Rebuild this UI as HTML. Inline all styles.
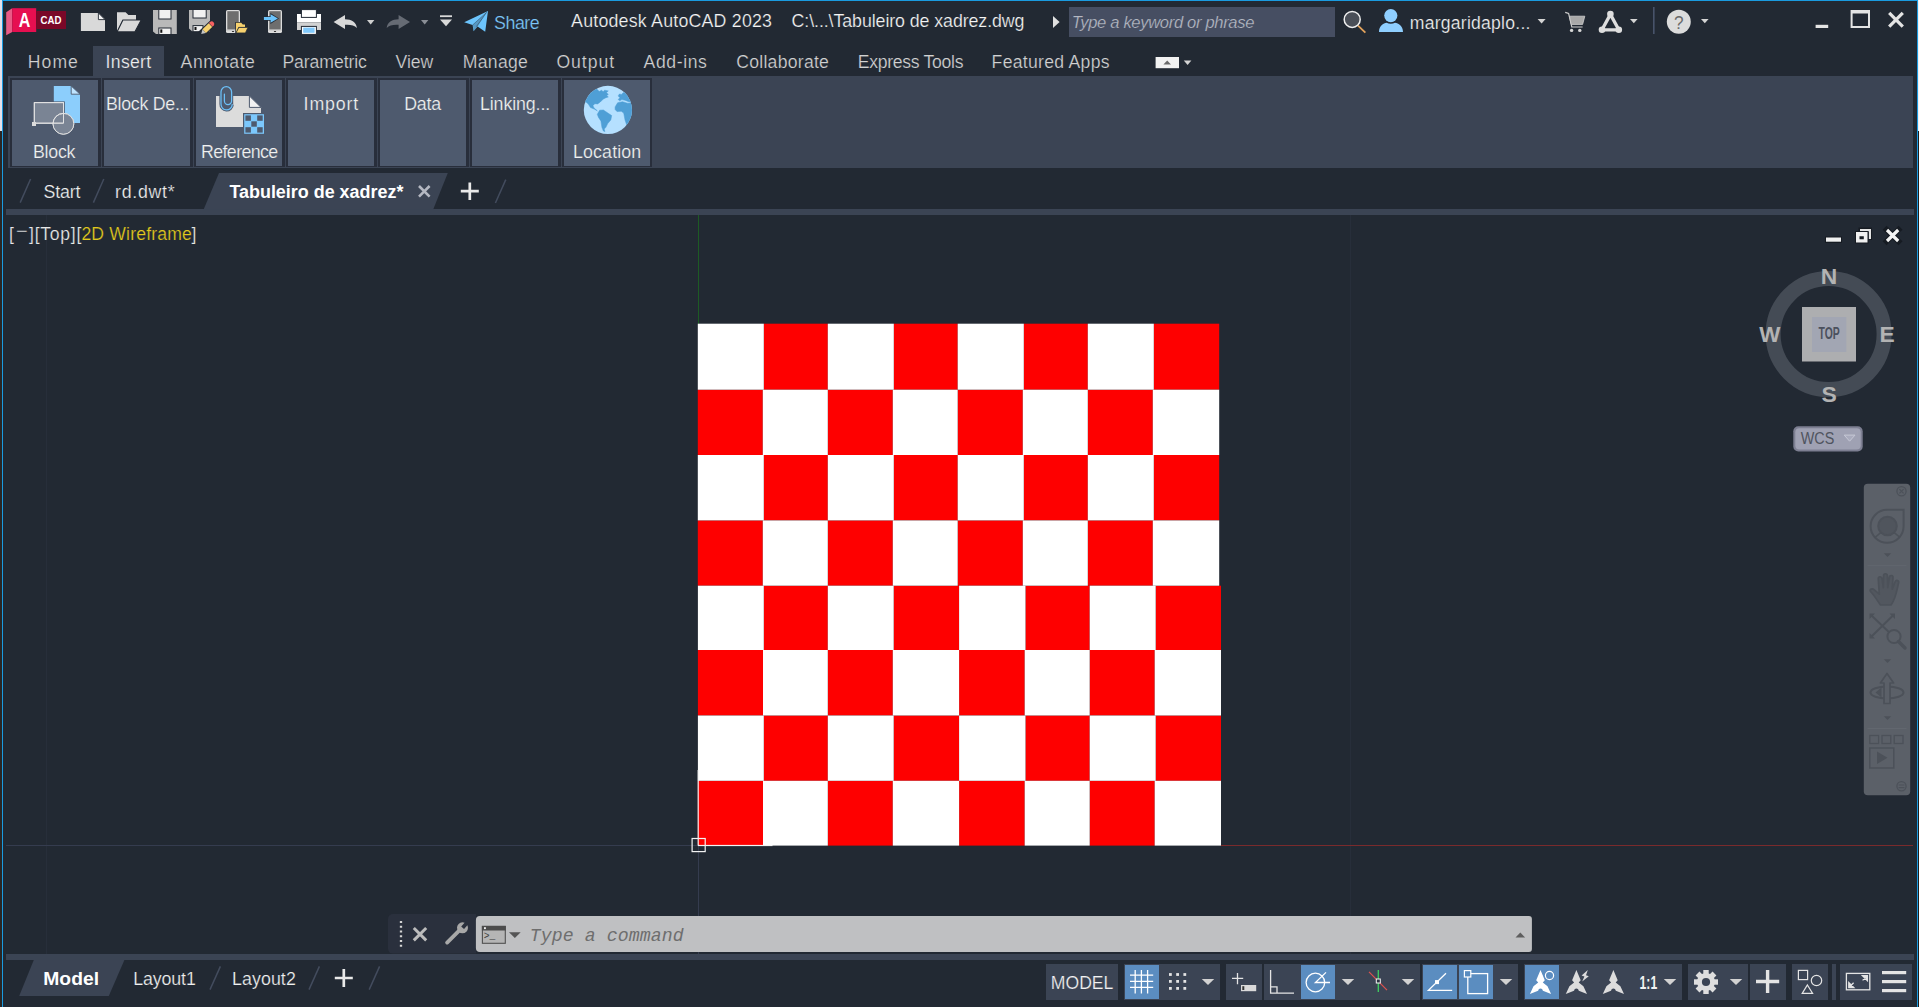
<!DOCTYPE html>
<html lang="en"><head><meta charset="utf-8"><title>Autodesk AutoCAD 2023 - Tabuleiro de xadrez.dwg</title>
<style>
html,body{margin:0;padding:0;background:#222933;overflow:hidden}
body{width:1919px;height:1007px;position:relative;font-family:"Liberation Sans", sans-serif}
#app{position:absolute;left:0;top:0;width:1919px;height:1007px;background:#222933;overflow:hidden}
#app>div{position:absolute;overflow:hidden}
svg{display:block;position:absolute;left:0;top:0}
text{white-space:pre}
</style></head><body><div id="app">
<div class="titlebar" style="left:0px;top:0px;width:1919px;height:44px"><svg width="1919" height="44" viewBox="0 0 1919 44"><rect x="0" y="0" width="1919" height="44" fill="#222933"/><path d="M6.2 12.2 L12.2 8.2 V32 L6.2 35.2 Z" fill="#ea5a86"/><rect x="12.2" y="8.2" width="24" height="23.8" fill="#e60f50"/><rect x="36.2" y="11" width="29.8" height="18" fill="#7a0828"/><text x="18.70" y="26.60" textLength="11.60" lengthAdjust="spacingAndGlyphs" font-family='"Liberation Sans", sans-serif' font-size="19.50" font-weight="bold" font-style="normal" fill="#ffffff">A</text><text x="40.56" y="23.80" textLength="20.88" lengthAdjust="spacingAndGlyphs" font-family='"Liberation Sans", sans-serif' font-size="10.60" font-weight="bold" font-style="normal" fill="#ffffff">CAD</text><path d="M80.9 13 H98.4 L105 19.6 V31 H80.9 Z" fill="#d9d9d9"/><path d="M98.4 13 L105 19.6 H98.4 Z" fill="#f4f4f4" stroke="#222933" stroke-width="0.9"/><path d="M117 31.6 V12.2 H125.6 L128.4 15 H136 V20 H122.6 Z" fill="#d9d9d9"/><path d="M122.9 20 H141.2 L134.8 31.9 H117 Z" fill="#d9d9d9" stroke="#222933" stroke-width="1.1"/><path d="M153.0 10.0 h23.8 v24.0 h-20.8 l-3 -2.6 z" fill="#b9b9b9"/><rect x="158.8" y="9.5" width="12.2" height="9.5" fill="#f1f1f1" stroke="#222933" stroke-width="1"/><rect x="158.8" y="28.0" width="12.2" height="6.5" fill="#f1f1f1" stroke="#222933" stroke-width="1"/><rect x="160.3" y="29.4" width="2" height="3.4" fill="#111"/><path d="M189.0 10.0 h21.0 v21.2 h-18.0 l-3 -2.6 z" fill="#b9b9b9"/><rect x="193.0" y="9.5" width="13.2" height="8.5" fill="#f1f1f1" stroke="#222933" stroke-width="1"/><rect x="193.0" y="25.6" width="10.0" height="6.1" fill="#f1f1f1" stroke="#222933" stroke-width="1"/><rect x="194.5" y="27.0" width="2" height="3.0" fill="#111"/><g transform="translate(201.2 34) rotate(-43.7)"><path d="M-0.6 -3.6 L17.4 -3.6 L17.4 3.6 L-0.6 3.6 Z" fill="#222933"/><path d="M0 0 L4.2 -2.5 V2.5 Z" fill="#c4c4c4"/><rect x="4.2" y="-2.5" width="8.6" height="5" fill="#f7d16e"/><rect x="13.4" y="-2.5" width="1.4" height="5" fill="#f66161"/><path d="M13.4 -2.5 h1.2 a2.5 2.5 0 0 1 0 5 h-1.2 z" fill="#f66161"/></g><rect x="226.0" y="10.0" width="14" height="23" rx="1.6" fill="#dcdcdc"/><rect x="227.3" y="11.2" width="11.4" height="18.4" fill="#6e6e6e"/><rect x="226.0" y="29.6" width="14" height="0.8" fill="#bdbdbd"/><rect x="231.9" y="30.9" width="2.2" height="1" rx="0.5" fill="#333"/><path d="M235.3 33.6 V22 H241.6 L243.2 23.8 H245.8 V27 L248.9 26.6 L246 33.6 Z" fill="#222933"/><path d="M236 32.6 V22.8 H241.2 L242.8 24.6 H245 V27 H238.6 Z" fill="#f7d16e"/><path d="M238.8 27.4 H247.9 L245.4 32.9 H236 Z" fill="#f7d16e" stroke="#222933" stroke-width="0.7"/><rect x="268.0" y="10.0" width="14" height="23" rx="1.6" fill="#dcdcdc"/><rect x="269.3" y="11.2" width="11.4" height="18.4" fill="#6e6e6e"/><rect x="268.0" y="29.6" width="14" height="0.8" fill="#bdbdbd"/><rect x="273.9" y="30.9" width="2.2" height="1" rx="0.5" fill="#333"/><path d="M263.4 16.2 H270.4 V13 L279 18.5 L270.4 24 V20.7 H263.4 Z" fill="#222933"/><path d="M263.9 16.9 H270.6 V14.3 L277.9 18.5 L270.6 22.8 V20.1 H263.9 Z" fill="#6cc4fc"/><rect x="297" y="14" width="24" height="8.4" fill="#ffffff"/><rect x="297" y="22.4" width="24" height="7.6" fill="#d2d2d2"/><rect x="301.4" y="9.6" width="15" height="7.8" fill="#ffffff" stroke="#222933" stroke-width="1"/><rect x="301.4" y="26.4" width="15" height="8" fill="#ffffff" stroke="#222933" stroke-width="1"/><rect x="303.2" y="27.6" width="11.4" height="5.2" fill="#82c9fb"/><path d="M333.6 22 L345 15 V19.2 C351.6 19.2 356.4 22 356.9 28 C354.4 25 350.6 24.6 345 24.8 V29 Z" fill="#d9d9d9"/><path d="M367.0 20.0 h7.4 l-3.70 4.4 z" fill="#cfcfcf"/><path d="M410 22 L398.6 15 V19.2 C392 19.2 387.2 22 386.7 28 C389.2 25 393 24.6 398.6 24.8 V29 Z" fill="#666b74"/><path d="M421.0 20.0 h7.4 l-3.70 4.4 z" fill="#8a8e96"/><rect x="440" y="15.3" width="12" height="1.8" fill="#d9d9d9"/><path d="M440 19.6 h12 l-6 6.6 z" fill="#d9d9d9"/><path d="M464.2 22.2 L488 11 L485.2 31.8 L477.6 26.6 L473.6 31.2 L472.6 25 Z" fill="#6cc4fc"/><path d="M472.6 25 L486.2 13 L477.6 26.6 L474 30.6 Z" fill="#222933" opacity="0.28"/><path d="M472.6 25 L486.6 12.4 L476.4 26.6" fill="none" stroke="#222933" stroke-width="0.6" opacity="0.7"/><text x="494.10" y="29.20" textLength="45.50" lengthAdjust="spacing" font-family='"Liberation Sans", sans-serif' font-size="17.80" font-weight="normal" font-style="normal" fill="#7cc6fa" stroke="#222933" stroke-width="0.22">Share</text><text x="571.10" y="27.00" textLength="200.90" lengthAdjust="spacing" font-family='"Liberation Sans", sans-serif' font-size="17.80" font-weight="normal" font-style="normal" fill="#f4f4f4" stroke="#222933" stroke-width="0.22">Autodesk AutoCAD 2023</text><text x="791.50" y="27.00" textLength="233.00" lengthAdjust="spacing" font-family='"Liberation Sans", sans-serif' font-size="17.80" font-weight="normal" font-style="normal" fill="#f4f4f4" stroke="#222933" stroke-width="0.22">C:\...\Tabuleiro de xadrez.dwg</text><path d="M1053 16 L1059.6 22 L1053 28 Z" fill="#e0e0e0"/><rect x="1069" y="7" width="266" height="30" fill="#464e62"/><text x="1071.72" y="27.90" textLength="182.68" lengthAdjust="spacing" font-family='"Liberation Sans", sans-serif' font-size="16.60" font-weight="normal" font-style="italic" fill="#b4b8c2" stroke="#464e62" stroke-width="0.22">Type a keyword or phrase</text><path d="M1358 25.6 L1365.4 32.6" stroke="#e3a35c" stroke-width="1.8"/><circle cx="1352.2" cy="19.4" r="8" fill="#4a4f58" stroke="#efefef" stroke-width="1.5"/><circle cx="1390.8" cy="15.6" r="6.6" fill="#8fcfff"/><path d="M1379 32 C1379 26 1383.4 23.4 1386.6 22.8 C1389 24.2 1392.6 24.2 1395 22.8 C1398.4 23.4 1403 26 1403 32 Z" fill="#8fcfff"/><text x="1409.80" y="29.00" textLength="120.60" lengthAdjust="spacing" font-family='"Liberation Sans", sans-serif' font-size="17.60" font-weight="normal" font-style="normal" fill="#f2f2f2" stroke="#222933" stroke-width="0.22">margaridaplo...</text><path d="M1537.6 18.9 h8.0 l-4.00 4.6 z" fill="#d4d4d4"/><path d="M1565.2 12.4 L1568.6 13.4 L1571.8 27 H1582.6" fill="none" stroke="#cfcfcf" stroke-width="1.2"/><path d="M1569.4 16.2 H1584.8 L1582.6 24.4 H1571.2 Z" fill="#a8a8a8" stroke="#cfcfcf" stroke-width="0.8"/><circle cx="1571.6" cy="30.4" r="1.7" fill="#d6d6d6"/><circle cx="1579.8" cy="30.4" r="1.7" fill="#d6d6d6"/><path d="M1610.4 14.4 L1602 29.8 H1618.8 Z" fill="none" stroke="#dedede" stroke-width="3.3" stroke-linejoin="round"/><circle cx="1610.4" cy="14" r="3.3" fill="#dedede"/><circle cx="1602" cy="29.8" r="3.3" fill="#dedede"/><circle cx="1618.8" cy="29.8" r="3.3" fill="#dedede"/><path d="M1630.0 18.9 h7.6 l-3.80 4.4 z" fill="#d4d4d4"/><rect x="1653" y="7" width="1.6" height="27" fill="#48536a"/><circle cx="1678.8" cy="21.8" r="12" fill="#dcdcdc"/><text x="1674.10" y="28.60" textLength="9.60" lengthAdjust="spacingAndGlyphs" font-family='"Liberation Sans", sans-serif' font-size="18.50" font-weight="normal" font-style="normal" fill="#6a6a6a">?</text><path d="M1701.0 18.9 h7.6 l-3.80 4.4 z" fill="#d4d4d4"/><rect x="1815.6" y="24.8" width="12.6" height="3.2" fill="#e4e4e4"/><path d="M1850.6 10 h19.4 v18 h-19.4 z M1852.6 13.4 v12.6 h15.4 v-12.6 z" fill="#e4e4e4" fill-rule="evenodd"/><path d="M1889.2 12.8 L1902.8 26.6 M1902.8 12.8 L1889.2 26.6" stroke="#e4e4e4" stroke-width="3.2"/></svg></div>
<div class="ribbon-tabs" style="left:0px;top:44px;width:1919px;height:32px"><svg width="1919" height="32" viewBox="0 44 1919 32"><rect x="0" y="44" width="1919" height="32" fill="#222933"/><rect x="93" y="46" width="71" height="30" fill="#3b4454"/><text x="27.80" y="67.60" textLength="50.10" lengthAdjust="spacing" font-family='"Liberation Sans", sans-serif' font-size="17.60" font-weight="normal" font-style="normal" fill="#d2d2d2" stroke="#222933" stroke-width="0.22">Home</text><text x="105.60" y="67.60" textLength="45.50" lengthAdjust="spacing" font-family='"Liberation Sans", sans-serif' font-size="17.60" font-weight="normal" font-style="normal" fill="#f0f0f0" stroke="#3b4454" stroke-width="0.22">Insert</text><text x="180.60" y="67.60" textLength="74.30" lengthAdjust="spacing" font-family='"Liberation Sans", sans-serif' font-size="17.60" font-weight="normal" font-style="normal" fill="#d2d2d2" stroke="#222933" stroke-width="0.22">Annotate</text><text x="282.40" y="67.60" textLength="84.50" lengthAdjust="spacing" font-family='"Liberation Sans", sans-serif' font-size="17.60" font-weight="normal" font-style="normal" fill="#d2d2d2" stroke="#222933" stroke-width="0.22">Parametric</text><text x="395.60" y="67.60" textLength="37.50" lengthAdjust="spacing" font-family='"Liberation Sans", sans-serif' font-size="17.60" font-weight="normal" font-style="normal" fill="#d2d2d2" stroke="#222933" stroke-width="0.22">View</text><text x="462.80" y="67.60" textLength="65.10" lengthAdjust="spacing" font-family='"Liberation Sans", sans-serif' font-size="17.60" font-weight="normal" font-style="normal" fill="#d2d2d2" stroke="#222933" stroke-width="0.22">Manage</text><text x="556.40" y="67.60" textLength="57.70" lengthAdjust="spacing" font-family='"Liberation Sans", sans-serif' font-size="17.60" font-weight="normal" font-style="normal" fill="#d2d2d2" stroke="#222933" stroke-width="0.22">Output</text><text x="643.60" y="67.60" textLength="63.30" lengthAdjust="spacing" font-family='"Liberation Sans", sans-serif' font-size="17.60" font-weight="normal" font-style="normal" fill="#d2d2d2" stroke="#222933" stroke-width="0.22">Add-ins</text><text x="736.20" y="67.60" textLength="92.70" lengthAdjust="spacing" font-family='"Liberation Sans", sans-serif' font-size="17.60" font-weight="normal" font-style="normal" fill="#d2d2d2" stroke="#222933" stroke-width="0.22">Collaborate</text><text x="857.80" y="67.60" textLength="105.70" lengthAdjust="spacing" font-family='"Liberation Sans", sans-serif' font-size="17.60" font-weight="normal" font-style="normal" fill="#d2d2d2" stroke="#222933" stroke-width="0.22">Express Tools</text><text x="991.60" y="67.60" textLength="117.90" lengthAdjust="spacing" font-family='"Liberation Sans", sans-serif' font-size="17.60" font-weight="normal" font-style="normal" fill="#d2d2d2" stroke="#222933" stroke-width="0.22">Featured Apps</text><rect x="1155.6" y="57" width="23.4" height="11.2" fill="#f2f2f2"/><path d="M1163.4 64.6 h7.6 l-3.8 -4 z" fill="#6a6a6a"/><path d="M1183.8 60.6 h7.6 l-3.8 4.4 z" fill="#d4d4d4"/></svg></div>
<div class="ribbon-panel" style="left:0px;top:76px;width:1919px;height:92px"><svg width="1919" height="92" viewBox="0 76 1919 92"><rect x="0" y="76" width="1919" height="92" fill="#222933"/><rect x="8" y="76" width="1905" height="92" fill="#3b4454"/><rect x="10" y="78" width="91" height="89" fill="#282e3b"/><rect x="12" y="80" width="86" height="86" fill="#4e5a6e"/><rect x="102" y="78" width="91" height="89" fill="#282e3b"/><rect x="104" y="80" width="86" height="86" fill="#4e5a6e"/><rect x="194" y="78" width="91" height="89" fill="#282e3b"/><rect x="196" y="80" width="86" height="86" fill="#4e5a6e"/><rect x="286" y="78" width="91" height="89" fill="#282e3b"/><rect x="288" y="80" width="86" height="86" fill="#4e5a6e"/><rect x="378" y="78" width="91" height="89" fill="#282e3b"/><rect x="380" y="80" width="86" height="86" fill="#4e5a6e"/><rect x="470" y="78" width="91" height="89" fill="#282e3b"/><rect x="472" y="80" width="86" height="86" fill="#4e5a6e"/><rect x="562" y="78" width="90" height="89" fill="#282e3b"/><rect x="564" y="80" width="86" height="86" fill="#4e5a6e"/><rect x="8" y="168" width="1905" height="0" fill="#3b4454"/><path d="M53.8 86 H71.2 L80 94.2 V123 H53.8 Z" fill="#8ccefc"/><path d="M71.2 86 L80 94.2 H71.2 Z" fill="#bfe4ff" stroke="#4e5a6e" stroke-width="0.9"/><rect x="33" y="101.4" width="31.8" height="23" fill="#4e5a6e"/><rect x="34.3" y="102.6" width="29.2" height="20.6" fill="#7a8494" stroke="#e2e2e2" stroke-width="1"/><circle cx="63.4" cy="123.8" r="10.4" fill="#7a8494" fill-opacity="0.0" stroke="#e2e2e2" stroke-width="1"/><path d="M63.4 123.8 m-10.4 0 a10.4 10.4 0 1 0 10.4 -10.4 v10.4 z" fill="#7a8494"/><path d="M64.9 113.5 a10.4 10.4 0 0 1 4.6 2 v8.1 h-4.6 z" fill="#7a8494"/><circle cx="63.4" cy="123.8" r="10.4" fill="none" stroke="#e2e2e2" stroke-width="1"/><path d="M34.3 102.6 h29.2 v20.6 h-29.2 z" fill="none" stroke="#e2e2e2" stroke-width="1"/><rect x="32" y="122" width="4" height="4" fill="#dcdcdc"/><path d="M216 96 H249.4 L261 107.4 V127 H216 Z" fill="#dcdcdc"/><path d="M249.4 96 L261 107.4 H249.4 Z" fill="#f2f2f2" stroke="#4e5a6e" stroke-width="1"/><path d="M231.6 104.4 V92 a5.3 5.3 0 0 0 -10.6 0 V104 a5.6 5.6 0 0 0 11.2 0.6" fill="#4e5a6e" stroke="#4e5a6e" stroke-width="3.2"/><path d="M224.4 94 V101 a3.6 3.6 0 0 0 7.2 0 V92 a5.3 5.3 0 0 0 -10.6 0 V104 a5.6 5.6 0 0 0 11.2 0.6" fill="none" stroke="#6cc0f8" stroke-width="1.25" stroke-linecap="round"/><rect x="243" y="113" width="22" height="21.6" fill="#4e5a6e"/><rect x="244.2" y="114.2" width="19.8" height="19.6" fill="#7cc8fc"/><rect x="245.4" y="115.4" width="5.5" height="5.4" fill="#4e5a6e"/><rect x="257.2" y="115.4" width="5.5" height="5.4" fill="#4e5a6e"/><rect x="251.3" y="121.3" width="5.5" height="5.4" fill="#4e5a6e"/><rect x="245.4" y="127.2" width="5.5" height="5.4" fill="#4e5a6e"/><rect x="257.2" y="127.2" width="5.5" height="5.4" fill="#4e5a6e"/><circle cx="607.9" cy="109.9" r="24.1" fill="#b5e0ff"/><clipPath id="gl"><circle cx="607.9" cy="109.9" r="24.1"/></clipPath><g clip-path="url(#gl)" fill="#4f9fd6" stroke="#4f9fd6" stroke-width="0.5" stroke-linejoin="round"><path d="M580.0 103.0 L583.0 92.0 L594.2 88.0 L597.3 89.4 L599.2 91.6 L601.6 90.2 L603.2 91.8 L604.6 90.2 L608.3 90.9 L606.4 92.6 L608.3 94.4 L606.6 95.4 L608.3 96.9 L605.9 97.7 L603.4 98.9 L600.3 102.0 L597.6 103.9 L594.8 103.7 L592.9 105.7 L594.2 108.2 L597.3 110.8 L594.2 109.0 L590.5 107.6 L588.6 104.5 L586.8 102.6 L585.4 102.0 Z"/><path d="M597.3 114.3 L599.7 110.2 L603.4 110.0 L607.1 112.5 L611.7 115.6 L610.8 119.9 L607.7 123.6 L605.9 127.3 L604.2 129.1 L604.9 131.6 L603.4 131.0 L601.9 127.3 L600.9 121.0 L598.5 117.4 Z"/><path d="M618.2 95.9 L619.4 94.0 L621.6 94.4 L623.1 92.8 L624.9 92.2 L628.0 90.0 L636.0 100.0 L631.4 102.2 L628.0 101.4 L625.0 100.2 L621.9 99.6 L619.7 100.8 L618.2 99.6 L619.9 97.7 Z"/><path d="M615.1 106.9 L617.6 102.8 L622.5 101.7 L627.4 103.2 L634.0 103.0 L634.0 120.0 L626.8 125.2 L625.0 119.9 L623.7 113.1 L621.3 111.3 L617.0 111.6 L615.1 109.4 Z"/></g><text x="33.00" y="157.60" textLength="42.40" lengthAdjust="spacing" font-family='"Liberation Sans", sans-serif' font-size="17.80" font-weight="normal" font-style="normal" fill="#f2f2f2" stroke="#4e5a6e" stroke-width="0.22">Block</text><text x="106.00" y="109.80" textLength="83.20" lengthAdjust="spacing" font-family='"Liberation Sans", sans-serif' font-size="17.80" font-weight="normal" font-style="normal" fill="#f2f2f2" stroke="#4e5a6e" stroke-width="0.22">Block De...</text><text x="201.00" y="157.60" textLength="77.20" lengthAdjust="spacing" font-family='"Liberation Sans", sans-serif' font-size="17.80" font-weight="normal" font-style="normal" fill="#f2f2f2" stroke="#4e5a6e" stroke-width="0.22">Reference</text><text x="303.60" y="109.80" textLength="54.60" lengthAdjust="spacing" font-family='"Liberation Sans", sans-serif' font-size="17.80" font-weight="normal" font-style="normal" fill="#f2f2f2" stroke="#4e5a6e" stroke-width="0.22">Import</text><text x="404.20" y="109.80" textLength="37.00" lengthAdjust="spacing" font-family='"Liberation Sans", sans-serif' font-size="17.80" font-weight="normal" font-style="normal" fill="#f2f2f2" stroke="#4e5a6e" stroke-width="0.22">Data</text><text x="480.00" y="109.80" textLength="70.20" lengthAdjust="spacing" font-family='"Liberation Sans", sans-serif' font-size="17.80" font-weight="normal" font-style="normal" fill="#f2f2f2" stroke="#4e5a6e" stroke-width="0.22">Linking...</text><text x="573.02" y="157.60" textLength="68.22" lengthAdjust="spacing" font-family='"Liberation Sans", sans-serif' font-size="17.80" font-weight="normal" font-style="normal" fill="#f2f2f2" stroke="#4e5a6e" stroke-width="0.22">Location</text></svg></div>
<div class="file-tabs" style="left:0px;top:168px;width:1919px;height:47px"><svg width="1919" height="47" viewBox="0 168 1919 47"><rect x="0" y="168" width="1919" height="47" fill="#222933"/><rect x="6" y="209" width="1908" height="6" fill="#3b4454"/><path d="M203.6 209.5 L219 173 H447.8 L433.2 209.5 Z" fill="#3b4454"/><path d="M20.2 202.6 L30.6 179" stroke="#434c5e" stroke-width="1.5"/><path d="M93.4 202.6 L103.8 179" stroke="#434c5e" stroke-width="1.5"/><path d="M495.4 203 L505.8 179.6" stroke="#434c5e" stroke-width="1.5"/><text x="43.40" y="197.60" textLength="37.00" lengthAdjust="spacing" font-family='"Liberation Sans", sans-serif' font-size="17.80" font-weight="normal" font-style="normal" fill="#f0f0f0" stroke="#222933" stroke-width="0.22">Start</text><text x="115.00" y="197.60" textLength="59.60" lengthAdjust="spacing" font-family='"Liberation Sans", sans-serif' font-size="17.80" font-weight="normal" font-style="normal" fill="#f0f0f0" stroke="#222933" stroke-width="0.22">rd.dwt*</text><text x="229.40" y="197.60" textLength="174.00" lengthAdjust="spacingAndGlyphs" font-family='"Liberation Sans", sans-serif' font-size="17.60" font-weight="bold" font-style="normal" fill="#ffffff">Tabuleiro de xadrez*</text><path d="M419 186 L429.6 196.6 M429.6 186 L419 196.6" stroke="#b4b8c2" stroke-width="2.6"/><path d="M460.8 191.2 H478.8 M469.8 182.4 V200" stroke="#e9e9e9" stroke-width="2.7"/></svg></div>
<div class="viewport" style="left:0px;top:215px;width:1919px;height:739px"><svg width="1919" height="739" viewBox="0 215 1919 739"><rect x="0" y="215" width="1919" height="739" fill="#222933"/><rect x="46" y="215" width="1" height="739" fill="#272e3a"/><rect x="1350" y="215" width="1" height="739" fill="#272e3a"/><rect x="698" y="846" width="1" height="108" fill="#353c4f"/><rect x="6" y="845" width="692" height="1" fill="#353c4f"/><rect x="698" y="215" width="1" height="109" fill="#1d5a24"/><rect x="1221" y="845" width="692" height="1" fill="#7a2a2c"/><g fill="#fe0000"><rect x="763.80" y="323.70" width="64.00" height="66.00"/><rect x="893.80" y="323.70" width="63.90" height="66.00"/><rect x="1023.80" y="323.70" width="64.00" height="66.00"/><rect x="1153.80" y="323.70" width="65.40" height="66.00"/><rect x="697.80" y="389.70" width="65.00" height="65.30"/><rect x="827.80" y="389.70" width="65.00" height="65.30"/><rect x="957.70" y="389.70" width="65.10" height="65.30"/><rect x="1087.80" y="389.70" width="65.00" height="65.30"/><rect x="763.80" y="455.00" width="64.00" height="65.40"/><rect x="893.80" y="455.00" width="63.90" height="65.40"/><rect x="1023.80" y="455.00" width="64.00" height="65.40"/><rect x="1153.80" y="455.00" width="65.40" height="65.40"/><rect x="697.80" y="520.40" width="65.00" height="65.30"/><rect x="827.80" y="520.40" width="65.00" height="65.30"/><rect x="957.70" y="520.40" width="65.10" height="65.30"/><rect x="1087.80" y="520.40" width="65.00" height="65.30"/><rect x="763.80" y="585.70" width="64.00" height="64.30"/><rect x="893.70" y="585.70" width="65.40" height="64.30"/><rect x="1025.50" y="585.70" width="64.20" height="64.30"/><rect x="1155.70" y="585.70" width="65.30" height="64.30"/><rect x="697.90" y="650.00" width="65.10" height="65.50"/><rect x="827.80" y="650.00" width="65.00" height="65.50"/><rect x="959.10" y="650.00" width="65.60" height="65.50"/><rect x="1089.70" y="650.00" width="65.00" height="65.50"/><rect x="763.80" y="715.50" width="64.00" height="65.30"/><rect x="893.70" y="715.50" width="65.40" height="65.30"/><rect x="1025.50" y="715.50" width="64.20" height="65.30"/><rect x="1155.70" y="715.50" width="65.30" height="65.30"/><rect x="697.90" y="780.80" width="65.10" height="64.80"/><rect x="827.80" y="780.80" width="65.00" height="64.80"/><rect x="959.10" y="780.80" width="65.60" height="64.80"/><rect x="1089.70" y="780.80" width="65.00" height="64.80"/></g><g fill="#ffffff"><rect x="697.80" y="323.70" width="66.00" height="66.00"/><rect x="827.80" y="323.70" width="66.00" height="66.00"/><rect x="957.70" y="323.70" width="66.10" height="66.00"/><rect x="1087.80" y="323.70" width="66.00" height="66.00"/><rect x="762.80" y="389.70" width="65.00" height="65.30"/><rect x="892.80" y="389.70" width="64.90" height="65.30"/><rect x="1022.80" y="389.70" width="65.00" height="65.30"/><rect x="1152.80" y="389.70" width="66.40" height="65.30"/><rect x="697.80" y="455.00" width="66.00" height="65.40"/><rect x="827.80" y="455.00" width="66.00" height="65.40"/><rect x="957.70" y="455.00" width="66.10" height="65.40"/><rect x="1087.80" y="455.00" width="66.00" height="65.40"/><rect x="762.80" y="520.40" width="65.00" height="65.30"/><rect x="892.80" y="520.40" width="64.90" height="65.30"/><rect x="1022.80" y="520.40" width="65.00" height="65.30"/><rect x="1152.80" y="520.40" width="66.40" height="65.30"/><rect x="697.90" y="585.70" width="65.90" height="64.30"/><rect x="827.80" y="585.70" width="65.90" height="64.30"/><rect x="959.10" y="585.70" width="66.40" height="64.30"/><rect x="1089.70" y="585.70" width="66.00" height="64.30"/><rect x="763.00" y="650.00" width="64.80" height="65.50"/><rect x="892.80" y="650.00" width="66.30" height="65.50"/><rect x="1024.70" y="650.00" width="65.00" height="65.50"/><rect x="1154.70" y="650.00" width="66.30" height="65.50"/><rect x="697.90" y="715.50" width="65.90" height="65.30"/><rect x="827.80" y="715.50" width="65.90" height="65.30"/><rect x="959.10" y="715.50" width="66.40" height="65.30"/><rect x="1089.70" y="715.50" width="66.00" height="65.30"/><rect x="763.00" y="780.80" width="64.80" height="64.80"/><rect x="892.80" y="780.80" width="66.30" height="64.80"/><rect x="1024.70" y="780.80" width="65.00" height="64.80"/><rect x="1154.70" y="780.80" width="66.30" height="64.80"/></g><rect x="697.6" y="770" width="1.2" height="75.6" fill="#f2f2f2"/><rect x="698" y="844.9" width="74.5" height="1.2" fill="#f2f2f2"/><rect x="692.1" y="838.5" width="13.1" height="13.1" fill="none" stroke="#f2f2f2" stroke-width="1.2"/><text x="9.10" y="240.00" textLength="4.80" lengthAdjust="spacing" font-family='"Liberation Sans", sans-serif' font-size="17.60" font-weight="normal" font-style="normal" fill="#e8e8e8" stroke="#222933" stroke-width="0.22">[</text><text x="15.90" y="237.00" textLength="11.60" lengthAdjust="spacingAndGlyphs" font-family='"Liberation Sans", sans-serif' font-size="17.60" font-weight="normal" font-style="normal" fill="#e8e8e8" stroke="#222933" stroke-width="0.22">−</text><text x="29.10" y="240.00" textLength="52.20" lengthAdjust="spacing" font-family='"Liberation Sans", sans-serif' font-size="17.60" font-weight="normal" font-style="normal" fill="#e8e8e8" stroke="#222933" stroke-width="0.22">][Top][</text><text x="81.40" y="240.00" textLength="110.50" lengthAdjust="spacing" font-family='"Liberation Sans", sans-serif' font-size="17.60" font-weight="normal" font-style="normal" fill="#e3c91c" stroke="#222933" stroke-width="0.22">2D Wireframe</text><text x="191.60" y="240.00" textLength="4.70" lengthAdjust="spacing" font-family='"Liberation Sans", sans-serif' font-size="17.60" font-weight="normal" font-style="normal" fill="#e8e8e8" stroke="#222933" stroke-width="0.22">]</text><rect x="1825" y="236.5" width="17" height="6.5" fill="#161b22"/><rect x="1826" y="237.5" width="15" height="4.2" fill="#f0f0f0"/><rect x="1858.5" y="227.5" width="13.5" height="12.5" fill="#161b22"/><path d="M1860 229 h11 v10 h-2.2 v-7.6 h-8.8 z" fill="#e4e4e4"/><rect x="1855" y="231" width="13.5" height="12.5" fill="#161b22"/><path d="M1856 232 h11.5 v10.5 h-11.5 z M1859.5 236.3 v3 h4.3 v-3 z" fill="#f0f0f0" fill-rule="evenodd"/><path d="M1886.6 229.6 L1898.6 241.4 M1898.6 229.6 L1886.6 241.4" stroke="#161b22" stroke-width="5.6" stroke-linecap="square"/><path d="M1887 230 L1898.2 241 M1898.2 230 L1887 241" stroke="#f4f4f4" stroke-width="3.2" stroke-linecap="butt"/><circle cx="1828.6" cy="334.1" r="55.5" fill="none" stroke="#444b55" stroke-width="15"/><rect x="1802" y="307" width="54" height="54.5" fill="#adaeb0"/><rect x="1812" y="317" width="34.3" height="35" fill="#a2a6b3"/><text x="1818.60" y="339.40" textLength="21.20" lengthAdjust="spacingAndGlyphs" font-family='"Liberation Sans", sans-serif' font-size="15.60" font-weight="bold" font-style="normal" fill="#4b505d">TOP</text><text x="1820.80" y="284.30" textLength="16.50" lengthAdjust="spacingAndGlyphs" font-family='"Liberation Sans", sans-serif' font-size="22.30" font-weight="bold" font-style="normal" fill="#b3b3b3">N</text><text x="1821.40" y="401.60" textLength="15.30" lengthAdjust="spacingAndGlyphs" font-family='"Liberation Sans", sans-serif' font-size="22.30" font-weight="bold" font-style="normal" fill="#b3b3b3">S</text><text x="1759.30" y="342.30" textLength="21.10" lengthAdjust="spacingAndGlyphs" font-family='"Liberation Sans", sans-serif' font-size="22.30" font-weight="bold" font-style="normal" fill="#b3b3b3">W</text><text x="1879.40" y="342.30" textLength="15.20" lengthAdjust="spacingAndGlyphs" font-family='"Liberation Sans", sans-serif' font-size="22.30" font-weight="bold" font-style="normal" fill="#b3b3b3">E</text><rect x="1793.3" y="426.3" width="69.4" height="25.2" rx="5" fill="#7d7f92"/><rect x="1795.3" y="428.3" width="65.4" height="21.2" rx="4" fill="#9fa1b3"/><text x="1800.70" y="443.50" textLength="33.60" lengthAdjust="spacingAndGlyphs" font-family='"Liberation Sans", sans-serif' font-size="15.80" font-weight="normal" font-style="normal" fill="#50545f">WCS</text><path d="M1844.2 435.1 L1855 435.1 L1849.6 441.2 Z" fill="#a9abbd" stroke="#c6c8d6" stroke-width="1"/><rect x="1863.8" y="483.8" width="46.4" height="311.4" rx="4" fill="#5b6068"/><circle cx="1901.5" cy="491.3" r="4.6" fill="none" stroke="#4c5159" stroke-width="1.3"/><path d="M1899.4 489.2 l4.2 4.2 m0 -4.2 l-4.2 4.2" stroke="#4c5159" stroke-width="1.2"/><path d="M1887 509.8 h16.6 v16.5 a16.5 16.5 0 1 1 -16.6 -16.5 z" fill="none" stroke="#4c5159" stroke-width="2"/><circle cx="1887.5" cy="526" r="9.3" fill="#50555d" stroke="#4c5159" stroke-width="2"/><path d="M1875 537.5 l6 -5.2 M1900 537.5 l-6 -5.2" stroke="#4c5159" stroke-width="1.6"/><path d="M1883.8 553.3 h7.4 l-3.7 3.6 z" fill="#4c5159"/><rect x="1867.5" y="565.2" width="39" height="1" fill="#62676f"/><path d="M1880.5 605 c-3 -4 -6 -9.5 -10 -13.5 c-1 -2.2 1.6 -3.6 3.8 -1.6 l5 4.2 l-1 -15.4 c0 -2.6 3.4 -2.6 3.8 0 l1.2 9 l0.3 -12 c0 -2.6 3.6 -2.6 3.8 0 l0.4 12 l1.6 -10.6 c0.4 -2.4 3.8 -2 3.6 0.4 l-0.8 11.6 l3 -7.4 c1 -2.2 4 -1.2 3.4 1.2 c-1.6 6.6 -2.8 16 -7.6 22.1 z" fill="#52575f" stroke="#4c5159" stroke-width="1.7" stroke-linejoin="round"/><path d="M1871 615 L1893 636 M1893.5 615 L1871 637" stroke="#4c5159" stroke-width="2"/><path d="M1869.5 613.5 h5.5 l-5.5 5.5 z M1895 613.5 h-5.5 l5.5 5.5 z M1869.5 638.5 h5.5 l-5.5 -5.5 z" fill="#4c5159"/><circle cx="1894" cy="636.5" r="6.6" fill="#5b6068" stroke="#4c5159" stroke-width="2"/><path d="M1898.5 641.5 l6.5 6.5" stroke="#4c5159" stroke-width="3.4" stroke-linecap="round"/><path d="M1883.8 659.3 h7.4 l-3.7 3.6 z" fill="#4c5159"/><ellipse cx="1887" cy="692.5" rx="16.5" ry="6" fill="none" stroke="#4c5159" stroke-width="2"/><path d="M1884 703.5 v-20.5 h-3.6 l6.6 -9.5 l6.6 9.5 h-3.6 v20.5 z" fill="#5b6068" stroke="#4c5159" stroke-width="1.7" stroke-linejoin="round"/><path d="M1875.5 692.5 l6 -5 v10 z" fill="#4c5159"/><path d="M1883.8 716.3 h7.4 l-3.7 3.6 z" fill="#4c5159"/><rect x="1867.5" y="728" width="39" height="1" fill="#62676f"/><rect x="1869.8" y="735.5" width="8.8" height="8" fill="none" stroke="#4c5159" stroke-width="1.3"/><rect x="1882.0" y="735.5" width="8.8" height="8" fill="none" stroke="#4c5159" stroke-width="1.3"/><rect x="1894.2" y="735.5" width="8.8" height="8" fill="none" stroke="#4c5159" stroke-width="1.3"/><rect x="1869.8" y="748" width="24" height="20" fill="none" stroke="#4c5159" stroke-width="1.5"/><path d="M1877 751.5 v12.5 l10.5 -6.2 z" fill="#4c5159"/><circle cx="1901.5" cy="786.3" r="4.6" fill="none" stroke="#4c5159" stroke-width="1.3"/><path d="M1898.6 785 h5.8 m-5.8 2.6 h5.8" stroke="#4c5159" stroke-width="1.1"/><path d="M393 914 h83 v39.6 h-83 a5 5 0 0 1 -5 -5 v-29.6 a5 5 0 0 1 5 -5 z" fill="#2a303d"/><path d="M479.9 915.9 h1049 a3 3 0 0 1 3 3 v30 a3 3 0 0 1 -3 3 h-1049 a4 4 0 0 1 -4 -4 v-28 a4 4 0 0 1 4 -4 z" fill="#bfc0c2"/><path d="M401 920.9 V947" stroke="#d4d4d4" stroke-width="2.3" stroke-dasharray="2.1 2.66"/><path d="M413.8 928 L426.2 940.4 M426.2 928 L413.8 940.4" stroke="#bcbcbc" stroke-width="3"/><path d="M447.1 942.6 L459.6 930.2" stroke="#a8a8a8" stroke-width="3.8" stroke-linecap="round"/><circle cx="462.5" cy="927.8" r="5.5" fill="#a8a8a8"/><rect x="0.2" y="-1.9" width="7" height="3.8" transform="translate(462.5 927.8) rotate(-48)" fill="#2a303d"/><rect x="482.4" y="926.4" width="22.9" height="16.9" fill="#b5b5b5" stroke="#505050" stroke-width="1.1"/><rect x="481.9" y="925.9" width="23.9" height="4.6" fill="#4c4c4c"/><rect x="484" y="927.2" width="1.9" height="1.9" fill="#f0f0f0"/><text x="483.70" y="938.90" textLength="11.60" lengthAdjust="spacingAndGlyphs" font-family='"Liberation Mono", monospace' font-size="10.50" font-weight="normal" font-style="normal" fill="#3e3e3e">&gt;_</text><path d="M509 932.2 h11.7 l-5.85 5.7 z" fill="#555555"/><text x="529.72" y="940.90" textLength="154.02" lengthAdjust="spacing" font-family='"Liberation Mono", monospace' font-size="18.20" font-weight="normal" font-style="italic" fill="#6e6e6e">Type a command</text><path d="M1515.5 937.6 h9.6 l-4.8 -5.2 z" fill="#5e5e5e"/></svg></div>
<div class="statusbar" style="left:0px;top:954px;width:1919px;height:53px"><svg width="1919" height="53" viewBox="0 954 1919 53"><rect x="0" y="954" width="1919" height="53" fill="#222933"/><rect x="6" y="954" width="1908" height="6" fill="#3b4454"/><path d="M19.2 996 L33.8 960 H124.4 L108.8 996 Z" fill="#3b4454"/><path d="M210.0 989.6 L220.4 966.4" stroke="#434c5e" stroke-width="1.5"/><path d="M309.0 989.6 L319.4 966.4" stroke="#434c5e" stroke-width="1.5"/><path d="M369.2 989.6 L379.6 966.4" stroke="#434c5e" stroke-width="1.5"/><text x="43.30" y="985.40" textLength="55.70" lengthAdjust="spacingAndGlyphs" font-family='"Liberation Sans", sans-serif' font-size="17.60" font-weight="bold" font-style="normal" fill="#ffffff">Model</text><text x="133.20" y="985.40" textLength="62.60" lengthAdjust="spacing" font-family='"Liberation Sans", sans-serif' font-size="17.80" font-weight="normal" font-style="normal" fill="#f0f0f0" stroke="#222933" stroke-width="0.22">Layout1</text><text x="232.00" y="985.40" textLength="63.80" lengthAdjust="spacing" font-family='"Liberation Sans", sans-serif' font-size="17.80" font-weight="normal" font-style="normal" fill="#f0f0f0" stroke="#222933" stroke-width="0.22">Layout2</text><path d="M334.8 978 H352.8 M343.8 969 V987" stroke="#e9e9e9" stroke-width="2.7"/><rect x="1046" y="964" width="72" height="36" fill="#3b4454"/><rect x="1124" y="964" width="96" height="36" fill="#3b4454"/><rect x="1226" y="964" width="36" height="36" fill="#3b4454"/><rect x="1264" y="964" width="156" height="36" fill="#3b4454"/><rect x="1422" y="964" width="96" height="36" fill="#3b4454"/><rect x="1524" y="964" width="158" height="36" fill="#3b4454"/><rect x="1688" y="964" width="60" height="36" fill="#3b4454"/><rect x="1750" y="964" width="36" height="36" fill="#3b4454"/><rect x="1792" y="964" width="36" height="36" fill="#3b4454"/><rect x="1832" y="964" width="4" height="36" fill="#3b4454"/><rect x="1840" y="964" width="72" height="36" fill="#3b4454"/><rect x="1125" y="965" width="34" height="34" fill="#5b8dc0"/><rect x="1301" y="965" width="34" height="34" fill="#5b8dc0"/><rect x="1423" y="965" width="34" height="34" fill="#5b8dc0"/><rect x="1459" y="965" width="34" height="34" fill="#5b8dc0"/><rect x="1525" y="965" width="34" height="34" fill="#5b8dc0"/><text x="1050.80" y="989.00" textLength="62.60" lengthAdjust="spacing" font-family='"Liberation Sans", sans-serif' font-size="17.60" font-weight="normal" font-style="normal" fill="#f2f2f2" stroke="#3b4454" stroke-width="0.22">MODEL</text><path d="M1135.2 970 V993.4 M1141.4 970 V993.4 M1147.6 970 V993.4 M1130 975.2 H1153.2 M1130 981.3 H1153.2 M1130 987.4 H1153.2" stroke="#ffffff" stroke-width="1.3"/><rect x="1169.0" y="973.1" width="2.8" height="2.8" fill="#e4e4e4"/><rect x="1169.0" y="980.0" width="2.8" height="2.8" fill="#e4e4e4"/><rect x="1169.0" y="987.0" width="2.8" height="2.8" fill="#e4e4e4"/><rect x="1176.2" y="973.1" width="2.8" height="2.8" fill="#e4e4e4"/><rect x="1176.2" y="980.0" width="2.8" height="2.8" fill="#e4e4e4"/><rect x="1176.2" y="987.0" width="2.8" height="2.8" fill="#e4e4e4"/><rect x="1183.4" y="973.1" width="2.8" height="2.8" fill="#e4e4e4"/><rect x="1183.4" y="980.0" width="2.8" height="2.8" fill="#e4e4e4"/><rect x="1183.4" y="987.0" width="2.8" height="2.8" fill="#e4e4e4"/><path d="M1201.8 979.1 h12.4 l-6.20 6.0 z" fill="#d2d2d2"/><path d="M1232 978.4 H1243.2 M1237.5 973 V984.2" stroke="#e4e4e4" stroke-width="1.3"/><rect x="1241" y="985" width="15.2" height="6.2" fill="#d9d9d9"/><rect x="1242.3" y="986.2" width="2" height="3.8" fill="#333"/><path d="M1270.6 970 V993.2 H1294 M1270.6 986.8 H1277 V993.2" fill="none" stroke="#e4e4e4" stroke-width="1.3"/><circle cx="1315.4" cy="982.5" r="9.3" fill="none" stroke="#ffffff" stroke-width="1.3"/><path d="M1330 982.5 H1315.4 L1326 972.4" fill="none" stroke="#ffffff" stroke-width="1.3"/><path d="M1341.8 979.1 h12.4 l-6.20 6.0 z" fill="#d2d2d2"/><path d="M1369 971.8 L1387 990.2" stroke="#e0524f" stroke-width="1.2"/><path d="M1378.3 970 V992" stroke="#3fd060" stroke-width="1.3"/><rect x="1376.3" y="979" width="4" height="4" fill="#2a3040" stroke="#f4f4f4" stroke-width="1"/><path d="M1401.8 979.1 h12.4 l-6.20 6.0 z" fill="#d2d2d2"/><path d="M1452.2 990.4 H1428.4 L1446 973.2" fill="none" stroke="#ffffff" stroke-width="1.3"/><rect x="1435" y="980.1" width="4" height="4" fill="#ffffff"/><rect x="1467.8" y="973.6" width="19.8" height="20" fill="none" stroke="#ffffff" stroke-width="1.3"/><rect x="1464.4" y="970.6" width="6.4" height="6.4" fill="#5b8dc0" stroke="#ffffff" stroke-width="1.2"/><path d="M1499.8 979.1 h12.4 l-6.20 6.0 z" fill="#d2d2d2"/><path d="M1540.5 970.0 L1544.8 980.3 L1542.8 982.6 L1547.5 986.3 L1551.1 994.0 L1542.9 990.7 L1542.1 989.0 L1540.5 988.4 L1538.9 989.0 L1538.1 990.7 L1529.9 994.0 L1533.5 986.3 L1538.2 982.6 L1536.2 980.3 Z" fill="#ffffff"/><circle cx="1549.5" cy="975.5" r="4.1" fill="none" stroke="#ffffff" stroke-width="1.2"/><path d="M1576.4 970.0 L1580.7 980.3 L1578.7 982.6 L1583.4 986.3 L1587.0 994.0 L1578.8 990.7 L1578.0 989.0 L1576.4 988.4 L1574.8 989.0 L1574.0 990.7 L1565.8 994.0 L1569.4 986.3 L1574.1 982.6 L1572.1 980.3 Z" fill="#dcdcdc"/><path d="M1587.8 970 L1581.6 975.5 L1584.4 976.4 L1582.2 981.6 L1588.8 976.2 L1586 975.3 Z" fill="#dcdcdc"/><path d="M1613.4 970.0 L1617.7 980.3 L1615.7 982.6 L1620.4 986.3 L1624.0 994.0 L1615.8 990.7 L1615.0 989.0 L1613.4 988.4 L1611.8 989.0 L1611.0 990.7 L1602.8 994.0 L1606.4 986.3 L1611.1 982.6 L1609.1 980.3 Z" fill="#dcdcdc"/><text x="1639.60" y="989.00" textLength="17.60" lengthAdjust="spacingAndGlyphs" font-family='"Liberation Sans", sans-serif' font-size="17.60" font-weight="bold" font-style="normal" fill="#f2f2f2">1:1</text><path d="M1663.8 979.1 h12.4 l-6.20 6.0 z" fill="#d2d2d2"/><rect x="1703.30" y="970.00" width="5.4" height="24" transform="rotate(0.0 1706.0 982.0)" fill="#dedede"/><rect x="1703.30" y="970.00" width="5.4" height="24" transform="rotate(45.0 1706.0 982.0)" fill="#dedede"/><rect x="1703.30" y="970.00" width="5.4" height="24" transform="rotate(90.0 1706.0 982.0)" fill="#dedede"/><rect x="1703.30" y="970.00" width="5.4" height="24" transform="rotate(135.0 1706.0 982.0)" fill="#dedede"/><circle cx="1706.0" cy="982.0" r="9" fill="#dedede"/><circle cx="1706.0" cy="982.0" r="4.1" fill="#3b4454"/><path d="M1729.8 979.1 h12.4 l-6.20 6.0 z" fill="#d2d2d2"/><path d="M1756 981.5 H1779.2 M1767.6 970 V993" stroke="#e4e4e4" stroke-width="3.4"/><rect x="1798.4" y="970.4" width="9.2" height="9.2" fill="none" stroke="#e4e4e4" stroke-width="1.2"/><circle cx="1816.5" cy="980.5" r="5.2" fill="none" stroke="#e4e4e4" stroke-width="1.2"/><path d="M1807.4 985 L1812.6 993.4 H1802.2 Z" fill="none" stroke="#e4e4e4" stroke-width="1.2"/><rect x="1846.4" y="973.4" width="23.4" height="16.4" fill="none" stroke="#e4e4e4" stroke-width="1.3"/><path d="M1866.8 976.2 L1862.6 980.4 M1862.4 975.6 H1867.4 V980.6 Z" stroke="#e4e4e4" stroke-width="1.3" fill="#e4e4e4"/><path d="M1849.4 987 L1853.6 982.8 M1853.8 987.6 H1848.8 V982.6 Z" stroke="#e4e4e4" stroke-width="1.3" fill="#e4e4e4"/><rect x="1882" y="971" width="24.2" height="3.2" fill="#e4e4e4"/><rect x="1882" y="980" width="24.2" height="3.2" fill="#e4e4e4"/><rect x="1882" y="989" width="24.2" height="3.2" fill="#e4e4e4"/></svg></div>
<div class="frame" style="left:0;top:0;width:1919px;height:1007px;pointer-events:none"><svg width="1919" height="1007" viewBox="0 0 1919 1007"><rect x="0" y="0" width="2" height="131" fill="#e4e2ec"/><rect x="0" y="131" width="2" height="876" fill="#2a2624"/><rect x="2" y="0" width="1" height="1007" fill="#1a9be0"/><rect x="2" y="0" width="1916" height="1" fill="#1a9be0"/><rect x="1917" y="0" width="1" height="1007" fill="#1a9be0"/><rect x="1918" y="0" width="1" height="131" fill="#f0f0f4"/><rect x="1918" y="131" width="1" height="876" fill="#1e1e1e"/></svg></div>
</div></body></html>
